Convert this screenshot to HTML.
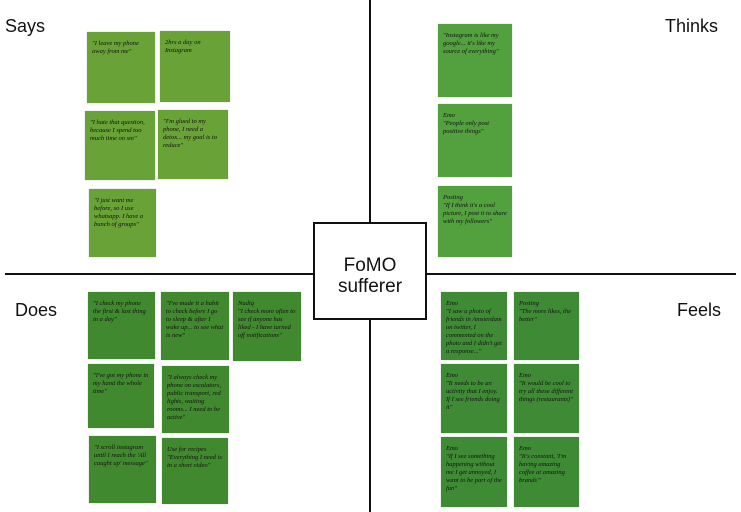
<!DOCTYPE html>
<html><head><meta charset="utf-8"><style>
body{margin:0;width:741px;height:512px;background:#fff;position:relative;overflow:hidden;font-family:"Liberation Sans",sans-serif}
.l{position:absolute;font-size:18px;color:#111}
.n{position:absolute;box-sizing:border-box;padding:8px 5px;font-family:"Liberation Serif",serif;font-style:italic;font-size:6.5px;line-height:8px;color:#111;box-shadow:0 0 1px rgba(0,0,0,.3)}
.s{background:#69a236}.t{background:#52a03e}.d{background:#41892e}.f{background:#3f8b35}
</style></head><body>
<div style="position:absolute;left:369px;top:0;width:2px;height:512px;background:#111"></div>
<div style="position:absolute;left:5px;top:273px;width:731px;height:2px;background:#111"></div>
<div style="position:absolute;left:313px;top:222px;width:114px;height:98px;box-sizing:border-box;border:2px solid #111;background:#fff;text-align:center;font-size:19px;line-height:21px;padding-top:31px;color:#111">FoMO<br>sufferer</div>
<div class="l" style="left:5px;top:16px">Says</div>
<div class="l" style="left:665px;top:16px">Thinks</div>
<div class="l" style="left:15px;top:300px">Does</div>
<div class="l" style="left:677px;top:300px">Feels</div>

<div class="n s" style="left:87px;top:32px;width:68px;height:71px">"I leave my phone away from me"</div>
<div class="n s" style="left:160px;top:31px;width:70px;height:71px">2hrs a day on Instagram</div>
<div class="n s" style="left:85px;top:111px;width:70px;height:69px">"I hate that question, because I spend too much time on sm"</div>
<div class="n s" style="left:158px;top:110px;width:70px;height:69px">"I'm glued to my phone, I need a detox... my goal is to reduce"</div>
<div class="n s" style="left:89px;top:189px;width:67px;height:68px">"I just want me before, so I use whatsapp. I have a bunch of groups"</div>

<div class="n t" style="left:438px;top:24px;width:74px;height:73px">"Instagram is like my google... it's like my source of everything"</div>
<div class="n t" style="left:438px;top:104px;width:74px;height:73px">Emo<br>"People only post positive things"</div>
<div class="n t" style="left:438px;top:186px;width:74px;height:71px">Posting<br>"If I think it's a cool picture, I post it to share with my followers"</div>

<div class="n d" style="left:88px;top:292px;width:67px;height:67px">"I check my phone the first &amp; last thing in a day"</div>
<div class="n d" style="left:161px;top:292px;width:68px;height:68px">"I've made it a habit to check before I go to sleep &amp; after I wake up... to see what is new"</div>
<div class="n d" style="left:233px;top:292px;width:68px;height:69px">Nadiq<br>"I check more often to see if anyone has liked - I have turned off notifications"</div>
<div class="n d" style="left:88px;top:364px;width:66px;height:64px">"I've got my phone in my hand the whole time"</div>
<div class="n d" style="left:162px;top:366px;width:67px;height:67px">"I always check my phone on escalators, public transport, red lights, waiting rooms... I need to be active"</div>
<div class="n d" style="left:89px;top:436px;width:67px;height:67px">"I scroll instagram until I reach the 'All caught up' message"</div>
<div class="n d" style="left:162px;top:438px;width:66px;height:66px">Use for recipes "Everything I need is in a short video"</div>

<div class="n f" style="left:441px;top:292px;width:66px;height:68px">Emo<br>"I saw a photo of friends in Amsterdam on twitter, I commented on the photo and I didn't get a response..."</div>
<div class="n f" style="left:514px;top:292px;width:65px;height:68px">Posting<br>"The more likes, the better"</div>
<div class="n f" style="left:441px;top:364px;width:66px;height:69px">Emo<br>"It needs to be an activity that I enjoy. If I see friends doing it"</div>
<div class="n f" style="left:514px;top:364px;width:65px;height:69px">Emo<br>"It would be cool to try all these different things (restaurants)"</div>
<div class="n f" style="left:441px;top:437px;width:66px;height:70px">Emo<br>"If I see something happening without me I get annoyed, I want to be part of the fun"</div>
<div class="n f" style="left:514px;top:437px;width:65px;height:70px">Emo<br>"It's constant, 'I'm having amazing coffee at amazing brands'"</div>
</body></html>
